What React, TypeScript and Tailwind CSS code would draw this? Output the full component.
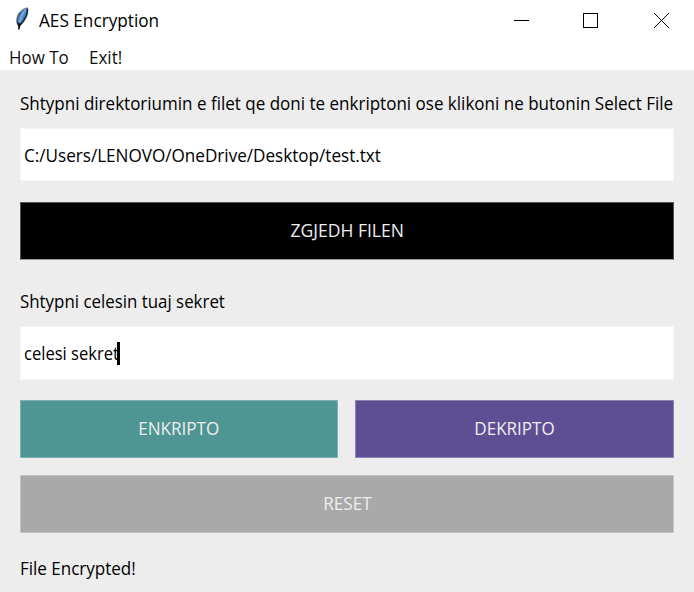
import type { ReactNode } from "react";

function Feather() {
  return (
    <svg width="18" height="26" viewBox="0 0 18 26" className="-mt-[2px] block">
      <path d="M5.4 18.4 C3 16.5 3.2 10.5 5.6 6.8 C7.6 3.6 10.4 1.2 14.6 0.8 C15.6 4.5 14.2 9.5 12 12.8 C10.6 15.4 8.6 17.4 6.8 18.8 Z" fill="#4686c8" stroke="#85878a" strokeWidth="1" />
      <path d="M14.2 1.6 C14.8 6 13 10 11 12.8 C10 14.4 9 15.6 8 16.6" fill="none" stroke="#24282e" strokeWidth="1.5" />
      <path d="M4.4 14.8 C4 11.6 5 8.6 7.4 5.4" fill="none" stroke="#4d535a" strokeWidth="1.1" />
      <path d="M12.4 2.8 C9.6 6.4 7.8 10.6 6.6 15" fill="none" stroke="#7db4ea" strokeWidth="1.6" />
      <path d="M3.8 14.6 L6 16.4 L9 16.2 L7.2 19.2 L6.4 22.8 L5.2 22.8 L5.2 19.4 Z" fill="#101214" />
    </svg>
  );
}

function Label({ scale, children }: { scale: string; children: ReactNode }) {
  return (
    <div className="flex h-6 text-[18px] leading-6">
      <span className={`origin-left whitespace-nowrap ${scale}`}>{children}</span>
    </div>
  );
}

function Button({ className, scale, children }: { className: string; scale: string; children: ReactNode }) {
  return (
    <button className={`flex h-[58px] items-center justify-center border pb-[2px] text-[18px] leading-6 text-[#eeeeee] ${className}`}>
      <span className={`whitespace-nowrap ${scale}`}>{children}</span>
    </button>
  );
}

export default function App() {
  return (
    <div className="flex h-[592px] w-[694px] flex-col overflow-hidden bg-white font-['Open_Sans','Noto_Sans',sans-serif] text-black [font-stretch:90%]">
      <header className="flex h-[41px] items-center justify-between pr-[25px] pl-[13px]">
        <div className="flex items-center">
          <Feather />
          <span className="ml-2 origin-left scale-x-[0.955] pb-[2px] text-[18px] leading-6">AES Encryption</span>
        </div>
        <svg width="155" height="15" viewBox="0 0 155 15" fill="none" stroke="#000" className="block">
          <path d="M0 7.5H15" />
          <rect x="69.5" y="0.5" width="14" height="14" />
          <path d="M140 0L155 15M155 0L140 15" />
        </svg>
      </header>
      <nav className="flex h-[29px] items-start gap-[17px] pt-1 pl-[9px] text-[18px] leading-6 text-[#111]">
        <span className="origin-left scale-x-[0.94]">How To</span>
        <span className="origin-left scale-x-[0.945]">Exit!</span>
      </nav>
      <main className="flex flex-1 flex-col border-t border-[#f2f2f2] bg-[#ededed] px-5 pt-5">
        <Label scale="scale-x-[0.9453]">Shtypni direktoriumin e filet qe doni te enkriptoni ose klikoni ne butonin Select File</Label>
        <div className="mt-[13px] flex h-[53px] items-center border border-[#f6f6f6] bg-white px-[3px] text-[18px] leading-6">
          <span className="origin-left scale-x-[0.95]">C:/Users/LENOVO/OneDrive/Desktop/test.txt</span>
        </div>
        <Button scale="scale-x-[0.973]" className="mt-[21px] border-[#555] border-b-[#999] bg-black">ZGJEDH FILEN</Button>
        <div className="mt-[29px]">
          <Label scale="scale-x-[0.9375]">Shtypni celesin tuaj sekret</Label>
        </div>
        <div className="mt-[13px] flex h-[54px] items-center border border-[#f6f6f6] bg-white px-[3px] text-[18px] leading-6">
          <span className="origin-left scale-x-[0.92]">celesi sekret</span>
          <i className="-ml-[10px] h-[23px] w-[3px] bg-black" />
        </div>
        <div className="mt-[20px] grid grid-cols-[318px_319px] gap-[17px]">
          <Button scale="scale-x-[0.95]" className="border-[#7fb3b2] bg-[#4e9594]">ENKRIPTO</Button>
          <Button scale="scale-x-[0.945]" className="border-[#8d82b4] bg-[#5e4f94]">DEKRIPTO</Button>
        </div>
        <Button scale="scale-x-[0.95]" className="mt-[17px] border-[#c4c4c4] bg-[#a9a9a9]">RESET</Button>
        <div className="mt-[23px]">
          <Label scale="scale-x-[0.945]">File Encrypted!</Label>
        </div>
      </main>
    </div>
  );
}
